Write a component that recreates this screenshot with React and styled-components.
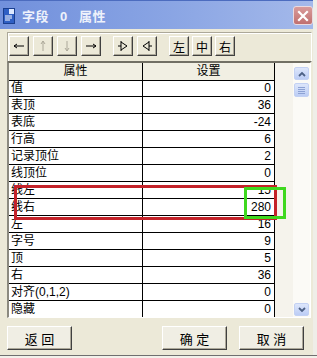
import React from "react";
import styled, { createGlobalStyle } from "styled-components";

const GlobalStyle = createGlobalStyle`
  html, body {
    margin: 0;
    padding: 0;
    background: #ffffff;
  }
  * {
    box-sizing: border-box;
  }
`;

const rows = [
  ["值", "0"],
  ["表顶", "36"],
  ["表底", "-24"],
  ["行高", "6"],
  ["记录顶位", "2"],
  ["线顶位", "0"],
  ["线左", "15"],
  ["线右", "280"],
  ["左", "16"],
  ["字号", "9"],
  ["顶", "5"],
  ["右", "36"],
  ["对齐(0,1,2)", "0"],
  ["隐藏", "0"],
];

const font = `"Liberation Sans", "Noto Sans CJK SC", sans-serif`;

const App = () => {
  return (
    <>
      <GlobalStyle />
      <Window>
        <TitleBar>
          <AppIcon viewBox="0 0 12 16">
            <rect x="0.5" y="0.5" width="11" height="15" fill="#2f5fc4" stroke="#1b3f8f" />
            <rect x="6" y="1" width="5" height="5" fill="#dce8ff" />
            <path d="M2 8h7M2 10h7M2 12h5" stroke="#ffffff" strokeWidth="1" />
          </AppIcon>
          <Title>字段 0 属性</Title>
          <CloseButton>
            <svg width="12" height="12" viewBox="0 0 12 12">
              <path d="M2 2L10 10M10 2L2 10" stroke="#ffffff" strokeWidth="2.2" strokeLinecap="square" />
            </svg>
          </CloseButton>
        </TitleBar>

        <Body>
          <Toolbar>
            <ToolGroup>
              <ToolButton>
                <Arrow d="M1 6H11M1 6L4 4M1 6L4 8" />
              </ToolButton>
              <ToolButton $disabled>
                <Arrow d="M6 1V11M6 1L4 4M6 1L8 4" $disabled />
              </ToolButton>
              <ToolButton $disabled>
                <Arrow d="M6 1V11M6 11L4 8M6 11L8 8" $disabled />
              </ToolButton>
              <ToolButton>
                <Arrow d="M1 6H11M11 6L8 4M11 6L8 8" />
              </ToolButton>
            </ToolGroup>
            <ToolGroup>
              <ToolButton>
                <Arrow d="M4 1V11M4 2L10 6L4 10M1 6H4" />
              </ToolButton>
              <ToolButton>
                <Arrow d="M8 1V11M8 2L2 6L8 10M8 6H11" />
              </ToolButton>
            </ToolGroup>
            <ToolGroup $tight>
              <ToolButton>左</ToolButton>
              <ToolButton>中</ToolButton>
              <ToolButton>右</ToolButton>
            </ToolGroup>
          </Toolbar>

          <GridFrame>
            <Table>
              <HeadCell>属性</HeadCell>
              <HeadCell>设置</HeadCell>
              {rows.map(([name, value]) => (
                <React.Fragment key={name}>
                  <NameCell>{name}</NameCell>
                  <ValueCell>{value}</ValueCell>
                </React.Fragment>
              ))}
            </Table>
            <Filler />
            <ScrollBar>
              <ScrollButton>
                <svg width="8" height="6" viewBox="0 0 8 6">
                  <path d="M1 5L4 2L7 5" stroke="#4d6185" strokeWidth="1.8" fill="none" />
                </svg>
              </ScrollButton>
              <Thumb>
                <Grip />
                <Grip />
                <Grip />
                <Grip />
              </Thumb>
              <Track />
              <ScrollButton>
                <svg width="8" height="6" viewBox="0 0 8 6">
                  <path d="M1 1L4 4L7 1" stroke="#4d6185" strokeWidth="1.8" fill="none" />
                </svg>
              </ScrollButton>
            </ScrollBar>
            <Mark $color="#c4232a" $left={5} $top={122} $width={263} $height={35} />
            <Mark $color="#3fd81f" $left={235} $top={124} $width={42} $height={32} />
          </GridFrame>

          <Footer>
            <DialogButton>返 回</DialogButton>
            <ButtonPair>
              <DialogButton>确 定</DialogButton>
              <DialogButton>取 消</DialogButton>
            </ButtonPair>
          </Footer>
        </Body>
      </Window>
    </>
  );
};

const Arrow = ({ d, $disabled }) => (
  <svg width="12" height="12" viewBox="0 0 12 12">
    <path d={d} stroke={$disabled ? "#aca899" : "#000000"} strokeWidth="1" fill="none" />
  </svg>
);

const Window = styled.div`
  width: 317px;
  height: 358px;
  padding-right: 4px;
  display: flex;
  flex-direction: column;
  background: #ece9d8;
  box-shadow: inset 0 -2px 0 #f2f1ea, inset 0 -3px 0 #6f6f6f, inset -4px 0 0 #efeee8;
  font-family: ${font};
  font-size: 12px;
  color: #000;
  overflow: hidden;
`;

const TitleBar = styled.div`
  height: 29px;
  flex: none;
  display: flex;
  align-items: center;
  padding: 2px 0 0 3px;
  background: linear-gradient(to right, #7190dc 0%, #8aa5e4 55%, #a4b9ea 100%);
  box-shadow: inset 0 1px 0 #4c6cbf;
`;

const AppIcon = styled.svg`
  width: 12px;
  height: 16px;
  flex: none;
`;

const Title = styled.div`
  margin-left: 7px;
  flex: 1;
  color: #eef2fb;
  font-weight: bold;
  font-size: 13px;
  white-space: pre;
  word-spacing: 7px;
  letter-spacing: 0.5px;
`;

const CloseButton = styled.div`
  width: 20px;
  height: 19px;
  display: flex;
  align-items: center;
  justify-content: center;
  border-radius: 3px;
  border: 1px solid #eadadf;
  background: linear-gradient(to bottom, #d99b9b, #c0706f);
`;

const Body = styled.div`
  flex: 1;
  display: flex;
  flex-direction: column;
  padding: 3px 1px 0 7px;
`;

const Toolbar = styled.div`
  height: 30px;
  display: flex;
  gap: 12px;
  padding: 3px 1px 0 1px;
  border: 1px solid #aca899;
  border-right-color: #ffffff;
  border-bottom-color: #716f64;
  box-shadow: inset 1px 1px 0 #ffffff;
`;

const ToolGroup = styled.div`
  display: flex;
  gap: ${(p) => (p.$tight ? "3px" : "4px")};
`;

const ToolButton = styled.div`
  width: 20px;
  height: 20px;
  display: flex;
  align-items: center;
  justify-content: center;
  font-size: 12px;
  background: #ece9d8;
  border: 1px solid;
  border-color: #ffffff #404040 #404040 #ffffff;
  box-shadow: inset -1px -1px 0 #aca899;
`;

const GridFrame = styled.div`
  position: relative;
  width: 304px;
  height: 256px;
  display: flex;
  border-top: 1px solid #716f64;
  border-left: 2px solid #8c8a80;
  border-right: 1px solid #ffffff;
  border-bottom: 1px solid #ffffff;
  overflow: hidden;
`;

const Table = styled.div`
  display: grid;
  grid-template-columns: 134px 132px;
  grid-auto-rows: 17px;
  align-content: start;
  background: #ffffff;
  height: max-content;
`;

const Cell = styled.div`
  border-right: 1px solid #000000;
  border-bottom: 1px solid #000000;
  line-height: 16px;
  white-space: nowrap;
  overflow: hidden;
`;

const HeadCell = styled(Cell)`
  height: 18px;
  line-height: 17px;
  text-align: center;
  background: #f1efe3;
`;

const NameCell = styled(Cell)`
  padding-left: 2px;
`;

const ValueCell = styled(Cell)`
  text-align: right;
  padding-right: 3px;
  font-family: "Liberation Sans Narrow", "Liberation Sans", sans-serif;
  font-size: 12px;
`;

const Filler = styled.div`
  width: 18px;
  flex: none;
  background: #f5f3ec;
`;

const ScrollBar = styled.div`
  width: 17px;
  flex: none;
  display: flex;
  flex-direction: column;
  align-items: center;
  padding: 4px 0 1px 0;
  gap: 3px;
  background: #fbfaf6;
`;

const ScrollButton = styled.div`
  width: 15px;
  height: 13px;
  display: flex;
  align-items: center;
  justify-content: center;
  border-radius: 2px;
  border: 1px solid #c3d1f3;
  background: linear-gradient(to bottom, #dde6fb, #bccdf5);
`;

const Thumb = styled(ScrollButton)`
  height: 14px;
  flex-direction: column;
  gap: 1px;
`;

const Grip = styled.div`
  width: 7px;
  height: 1px;
  background: #8da2d4;
`;

const Track = styled.div`
  flex: 1;
`;

const Mark = styled.div`
  position: absolute;
  left: ${(p) => p.$left}px;
  top: ${(p) => p.$top}px;
  width: ${(p) => p.$width}px;
  height: ${(p) => p.$height}px;
  border: 3px solid ${(p) => p.$color};
  pointer-events: none;
`;

const Footer = styled.div`
  margin-top: 8px;
  display: flex;
  justify-content: space-between;
  padding-right: 8px;
`;

const ButtonPair = styled.div`
  display: flex;
  gap: 12px;
`;

const DialogButton = styled.div`
  width: 65px;
  height: 24px;
  display: flex;
  align-items: center;
  justify-content: center;
  font-size: 13px;
  white-space: pre;
  background: #f0eee4;
  border: 1px solid;
  border-color: #ffffff #404040 #404040 #ffffff;
  box-shadow: inset -1px -1px 0 #aca899;
`;

export default App;
